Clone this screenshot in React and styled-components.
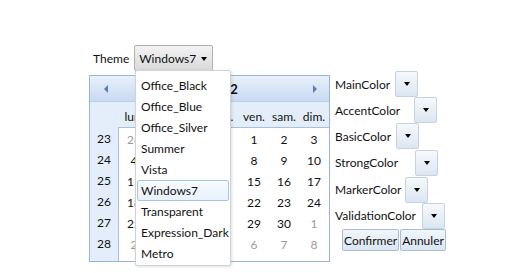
import React from 'react';
import styled, { createGlobalStyle } from 'styled-components';

const Global = createGlobalStyle`
  body {
    margin: 0;
    background: #fff;
    font-family: "Lato", "Noto Sans", sans-serif;
    font-size: 12px;
    color: #111;
  }
`

const Page = styled.div`
  width: 523px;
  height: 273px;
  padding: 45px 0 0 89px;
  box-sizing: border-box;
`

const ThemeRow = styled.div`
  display: flex;
  align-items: center;
  height: 26px;
  position: relative;
`

const Label = styled.span`
  padding: 1px 5px 0 4px;
  white-space: nowrap;
`

const Combo = styled.div`
  width: 79px;
  height: 26px;
  box-sizing: border-box;
  border: 1px solid #adb2b5;
  border-radius: 2px;
  background: linear-gradient(#f3f3f3, #e6e6e6 50%, #dadada);
  display: flex;
  align-items: center;
  justify-content: space-between;
  padding: 1px 5px 0 4px;
`

const Arrow = styled.span`
  width: 0;
  height: 0;
  border-left: 3.5px solid transparent;
  border-right: 3.5px solid transparent;
  border-top: 4px solid #000;
`

const Menu = styled.div`
  position: absolute;
  left: 46px;
  top: 25px;
  width: 96px;
  box-sizing: border-box;
  background: #fff;
  border: 1px solid #cfd3d8;
  border-radius: 2px;
  box-shadow: 1px 1px 3px rgba(0,0,0,0.12);
  padding: 4px 1px 1px 1px;
  z-index: 5;
`

const MenuItem = styled.div`
  height: 21px;
  line-height: 19px;
  padding-left: 3px;
  box-sizing: border-box;
  border: 1px solid ${p => p.$active ? '#a5c5ea' : 'transparent'};
  border-radius: 2px;
  background: ${p => p.$active ? 'linear-gradient(#f7fbff, #e8f1fc)' : 'transparent'};
`

const Body = styled.div`
  display: flex;
  margin-top: 4px;
`

const Calendar = styled.div`
  width: 241px;
  height: 187px;
  box-sizing: border-box;
  border: 1px solid #98b4d6;
  background: #e4eefa;
  display: flex;
  flex-direction: column;
  overflow: hidden;
`

const CalHeader = styled.div`
  height: 25px;
  flex-shrink: 0;
  display: flex;
  align-items: center;
  justify-content: space-between;
  padding: 0 12px 0 14px;
  background: linear-gradient(#e9f1fb, #d7e5f6 50%, #c8dbf2);
  border-bottom: 1px solid #b9cfea;
  font-weight: bold;
  font-size: 13px;
`

const NavArrow = styled.span`
  width: 0;
  height: 0;
  border-top: 4px solid transparent;
  border-bottom: 4px solid transparent;
  ${p => p.$dir === 'left' ? 'border-right: 4px solid #5b7fae;' : 'border-left: 4px solid #5b7fae;'}
`

const DayNames = styled.div`
  display: grid;
  grid-template-columns: 29px repeat(7, 30px);
  height: 25px;
  flex-shrink: 0;
  padding-top: 4px;
  box-sizing: border-box;
  align-items: center;
`

const DayName = styled.span`
  text-align: center;
`

const Grid = styled.div`
  display: flex;
  flex: 1;
`

const WeekCol = styled.div`
  width: 29px;
  display: flex;
  flex-direction: column;
`

const Days = styled.div`
  flex: 1;
  background: #fff;
  border-top: 1px solid #a9c0dc;
  border-left: 1px solid #a9c0dc;
  display: grid;
  grid-template-columns: repeat(7, 30px);
  grid-auto-rows: 21px;
  align-content: start;
`

const Cell = styled.span`
  display: flex;
  align-items: center;
  justify-content: center;
  height: 21px;
  padding-top: 1px;
  box-sizing: border-box;
  color: ${p => p.$other ? '#9a9a9a' : '#111'};
`

const Side = styled.div`
  display: flex;
  flex-direction: column;
  padding-left: 5px;
  margin-top: -4px;
`

const ColorRow = styled.div`
  display: flex;
  align-items: center;
  height: ${p => p.$h}px;
`

const ColorBtn = styled.div`
  width: 23px;
  height: 26px;
  margin-left: ${p => p.$gap}px;
  box-sizing: border-box;
  border: 1px solid #c5d2df;
  border-radius: 2px;
  background: linear-gradient(#f6f9fc, #e9eff6 50%, #dce6f1);
  display: flex;
  align-items: center;
  justify-content: center;
`

const Actions = styled.div`
  display: flex;
  gap: 1px;
  padding-left: 7px;
  margin-top: 1px;
`

const Button = styled.button`
  font: inherit;
  font-size: 12px;
  color: #111;
  height: 22px;
  padding: 0 1px;
  border: 1px solid #a8bdd6;
  border-radius: 2px;
  background: linear-gradient(#f2f6fb, #dbe6f3);
`

const themes = ['Office_Black', 'Office_Blue', 'Office_Silver', 'Summer', 'Vista', 'Windows7', 'Transparent', 'Expression_Dark', 'Metro']

const weeks = [
  { n: 23, d: [[28, 1], [29, 1], [30, 1], [31, 1], [1], [2], [3]] },
  { n: 24, d: [[4], [5], [6], [7], [8], [9], [10]] },
  { n: 25, d: [[11], [12], [13], [14], [15], [16], [17]] },
  { n: 26, d: [[18], [19], [20], [21], [22], [23], [24]] },
  { n: 27, d: [[25], [26], [27], [28], [29], [30], [1, 1]] },
  { n: 28, d: [[2, 1], [3, 1], [4, 1], [5, 1], [6, 1], [7, 1], [8, 1]] },
]

// gaps are uneven in the original, the labels sit in cells of different widths
const colors = [
  { name: 'MainColor', gap: 5, h: 26 },
  { name: 'AccentColor', gap: 14, h: 26 },
  { name: 'BasicColor', gap: 5, h: 26 },
  { name: 'StrongColor', gap: 17, h: 27 },
  { name: 'MarkerColor', gap: 4, h: 27 },
  { name: 'ValidationColor', gap: 6, h: 25 },
]

const App = () => {
  return (
    <Page>
      <Global />
      <ThemeRow>
        <Label>Theme</Label>
        <Combo>
          <span>Windows7</span>
          <Arrow />
        </Combo>
        <Menu>
          {themes.map(t => (
            <MenuItem key={t} $active={t === 'Windows7'}>{t}</MenuItem>
          ))}
        </Menu>
      </ThemeRow>
      <Body>
        <Calendar>
          <CalHeader>
            <NavArrow $dir='left' />
            <span>juin 2012</span>
            <NavArrow $dir='right' />
          </CalHeader>
          <DayNames>
            <span />
            {['lun.', 'mar.', 'mer.', 'jeu.', 'ven.', 'sam.', 'dim.'].map(d => (
              <DayName key={d}>{d}</DayName>
            ))}
          </DayNames>
          <Grid>
            <WeekCol>
              {weeks.map(w => <Cell key={w.n}>{w.n}</Cell>)}
            </WeekCol>
            <Days>
              {weeks.map(w => w.d.map((c, i) => (
                <Cell key={w.n + '-' + i} $other={c[1]}>{c[0]}</Cell>
              )))}
            </Days>
          </Grid>
        </Calendar>
        <Side>
          {colors.map(c => (
            <ColorRow key={c.name} $h={c.h}>
              <span>{c.name}</span>
              <ColorBtn $gap={c.gap}><Arrow /></ColorBtn>
            </ColorRow>
          ))}
          <Actions>
            <Button>Confirmer</Button>
            <Button>Annuler</Button>
          </Actions>
        </Side>
      </Body>
    </Page>
  )
}

export default App;
